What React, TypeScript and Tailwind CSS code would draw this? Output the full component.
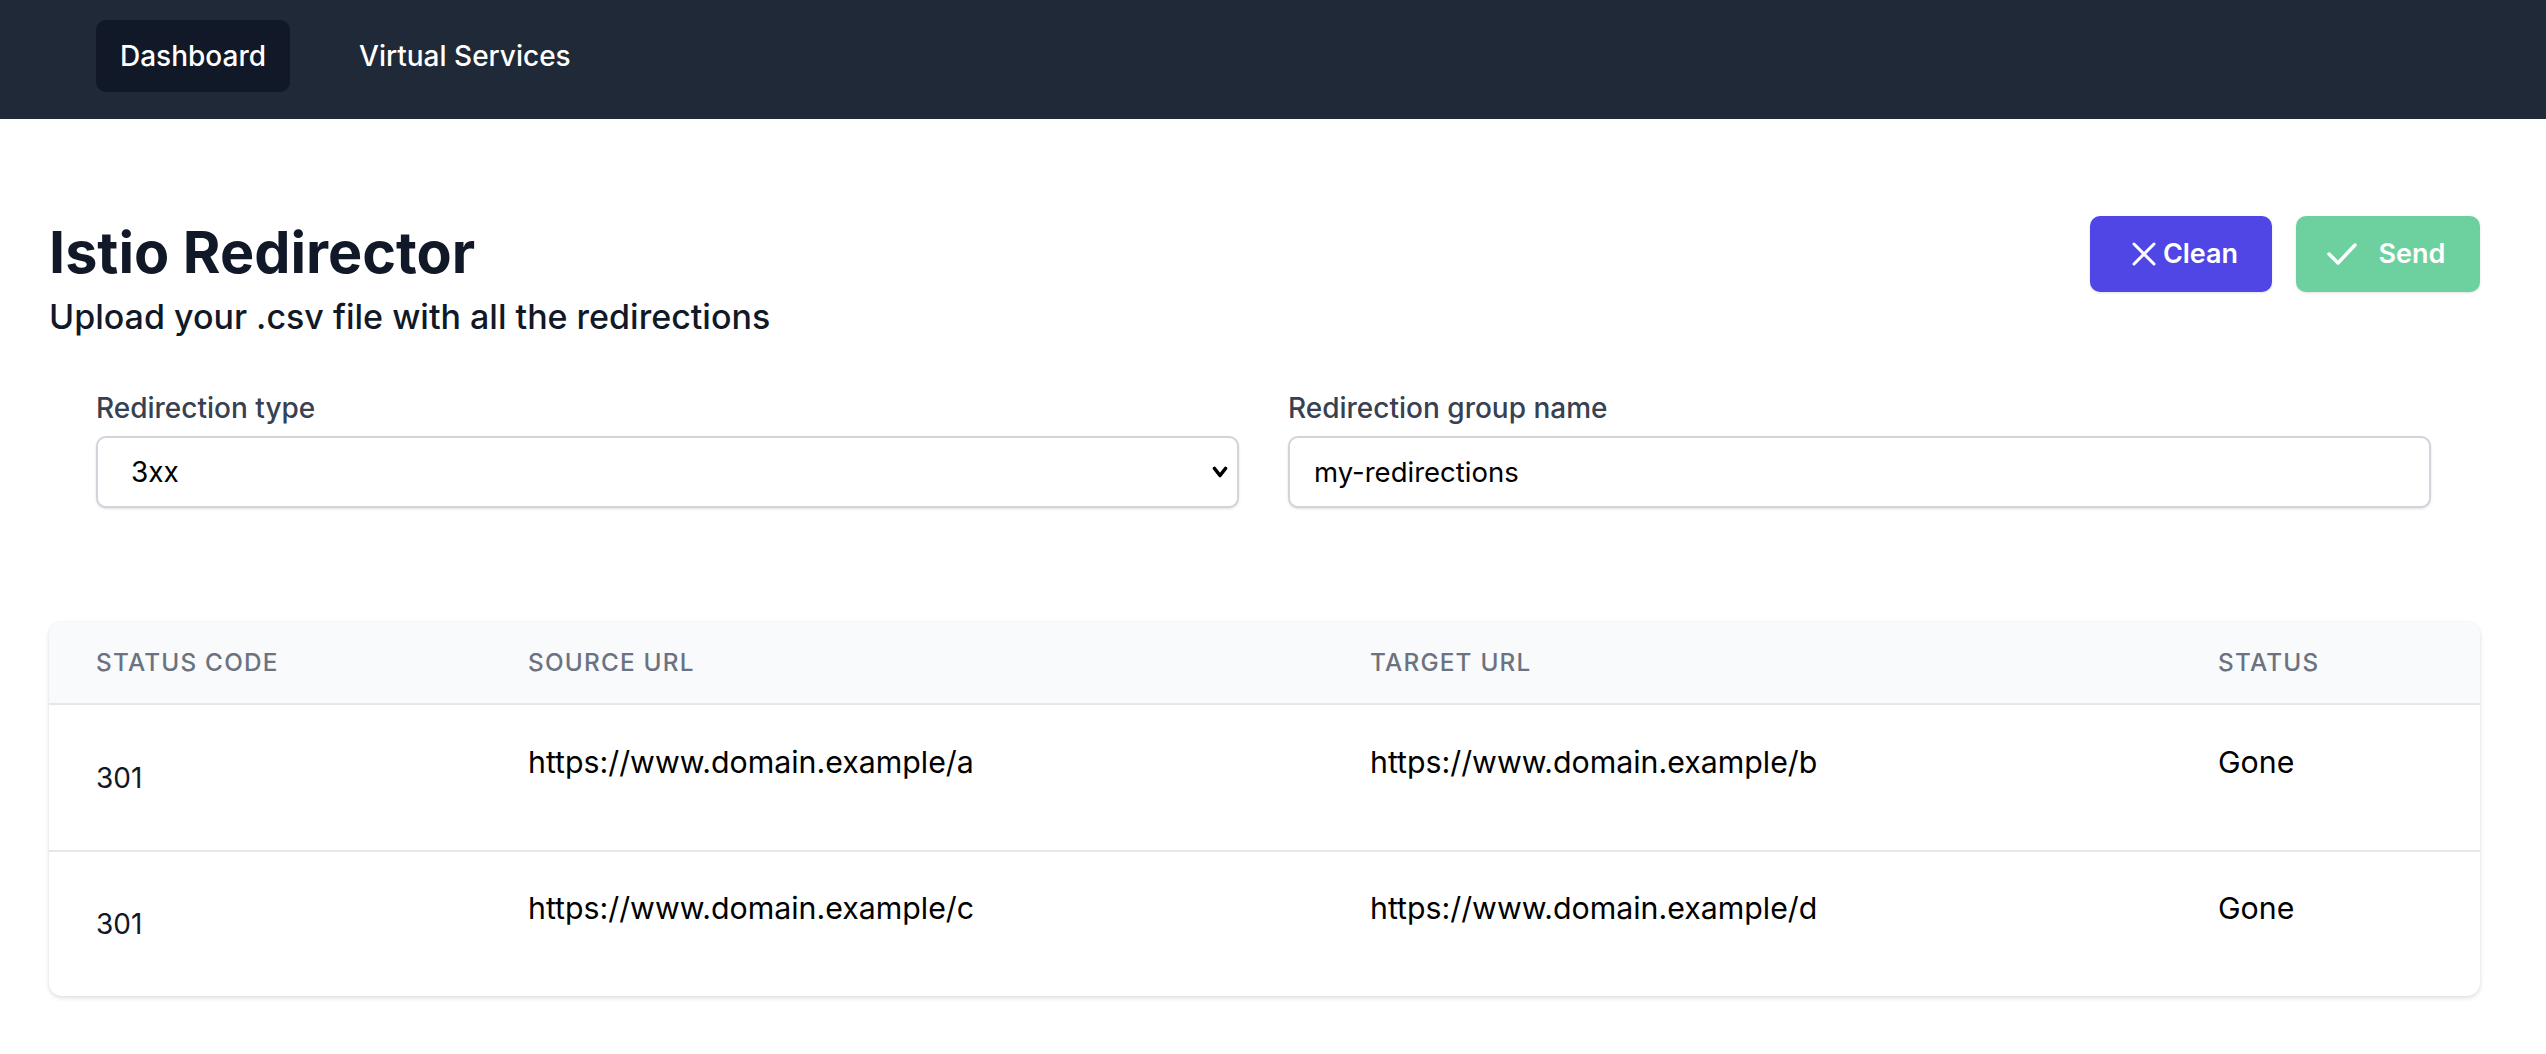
import type { ReactNode } from 'react'

const font = { fontFamily: 'Inter, "Noto Sans", "Liberation Sans", sans-serif' }

const redirections = [
  { code: '301', source: 'https://www.domain.example/a', target: 'https://www.domain.example/b', status: 'Gone' },
  { code: '301', source: 'https://www.domain.example/c', target: 'https://www.domain.example/d', status: 'Gone' },
]

function XIcon() {
  return (
    <svg fill="none" height="24" stroke="currentColor" strokeLinecap="round" strokeWidth="3" viewBox="0 0 24 24" width="24">
      <path d="M2 2 22 22M22 2 2 22" />
    </svg>
  )
}

function CheckIcon() {
  return (
    <svg fill="none" height="24" stroke="currentColor" strokeLinecap="round" strokeLinejoin="round" strokeWidth="3.5" viewBox="0 0 30 24" width="30">
      <polyline points="2,12 11,21 28,3" />
    </svg>
  )
}

function ChevronDown() {
  return (
    <svg fill="none" height="12" stroke="currentColor" strokeLinecap="round" strokeLinejoin="round" strokeWidth="3.6" viewBox="0 0 16 12" width="16">
      <polyline points="2.5,2.5 8,9.5 13.5,2.5" />
    </svg>
  )
}

function NavItem({ active, children }: { active?: boolean; children: ReactNode }) {
  return (
    <a
      className={
        active
          ? 'rounded-[10px] bg-[#111827] px-[24px] py-[16px] text-[28px] leading-[40px] font-medium text-white'
          : 'rounded-[10px] px-[24px] py-[16px] text-[28px] leading-[40px] font-medium text-white'
      }
      href="#"
    >
      {children}
    </a>
  )
}

function Field({ label, children }: { label: string; children: ReactNode }) {
  return (
    <label className="flex flex-col">
      <span className="text-[28px] leading-[39px] font-medium text-[#374151]">{label}</span>
      <div className="mt-[8px]">{children}</div>
    </label>
  )
}

export default function App() {
  return (
    <div className="min-h-screen bg-white" style={font}>
      <nav className="flex h-[119px] items-start gap-[45px] bg-[#1f2937] pt-[20px] pl-[96px]">
        <NavItem active>Dashboard</NavItem>
        <NavItem>Virtual Services</NavItem>
      </nav>

      <main className="pr-[66px] pl-[49px]">
        <header className="mt-[97px] flex items-start justify-between">
          <div className="pt-[4px]">
            <h1 className="text-[57.5px] leading-[65px] font-bold text-[#111827]">Istio Redirector</h1>
            <p className="mt-[9px] text-[34px] leading-[45px] font-medium text-[#111827]">
              Upload your .csv file with all the redirections
            </p>
          </div>
          <div className="flex gap-[24px]">
            <button
              className="flex h-[76px] w-[182px] items-center justify-center gap-[7px] rounded-[10px] bg-[#4f46e5] pl-[8px] text-[27px] font-semibold text-white shadow-sm"
              type="button"
            >
              <XIcon />
              Clean
            </button>
            <button
              className="flex h-[76px] w-[184px] items-center justify-center gap-[22px] rounded-[10px] bg-[#6dd19f] pr-[4px] text-[27px] font-semibold text-white shadow-sm"
              type="button"
            >
              <CheckIcon />
              Send
            </button>
          </div>
        </header>

        <section className="mt-[50px] grid grid-cols-2 gap-x-[49px] pr-[49px] pl-[47px]">
          <Field label="Redirection type">
            <div className="relative">
              <select
                className="h-[72px] w-full appearance-none rounded-[10px] border-2 border-[#d1d5db] bg-white pl-[33px] text-[28px] text-black shadow-sm outline-none"
                defaultValue="3xx"
              >
                <option value="3xx">3xx</option>
                <option value="4xx">4xx</option>
              </select>
              <span className="pointer-events-none absolute top-[30px] right-[11px] text-black">
                <ChevronDown />
              </span>
            </div>
          </Field>
          <Field label="Redirection group name">
            <input
              className="h-[72px] w-full rounded-[10px] border-2 border-[#d1d5db] bg-white pl-[24px] text-[27.5px] text-black shadow-sm outline-none"
              defaultValue="my-redirections"
              type="text"
            />
          </Field>
        </section>

        <section className="mt-[114px] overflow-hidden rounded-[13px] bg-white shadow-[0_2px_5px_rgba(0,0,0,0.13),0_0_2px_rgba(0,0,0,0.06)]">
          <table className="w-full table-fixed border-collapse text-left">
            <colgroup>
              <col className="w-[432px]" />
              <col className="w-[842px]" />
              <col className="w-[848px]" />
              <col />
            </colgroup>
            <thead className="bg-[#f9fafb]">
              <tr className="h-[82px] border-b-2 border-[#e5e7eb]">
                {['Status code', 'Source URL', 'Target URL', 'Status'].map((heading) => (
                  <th
                    className="pl-[47px] align-middle text-[24.3px] font-medium tracking-[0.05em] text-[#6b7280] uppercase"
                    key={heading}
                  >
                    {heading}
                  </th>
                ))}
              </tr>
            </thead>
            <tbody>
              {redirections.map((row, index) => (
                <tr
                  className={index < redirections.length - 1 ? 'h-[147px] border-b-2 border-[#e5e7eb]' : 'h-[145px]'}
                  key={row.source}
                >
                  <td className="pl-[47px] align-middle text-[28px] text-[#111827]">{row.code}</td>
                  <td className="pl-[47px] align-middle">
                    <div className="pb-[31px] text-[30.3px] leading-[45px] text-black">{row.source}</div>
                  </td>
                  <td className="pl-[47px] align-middle">
                    <div className="pb-[31px] text-[30.3px] leading-[45px] text-black">{row.target}</div>
                  </td>
                  <td className="pl-[47px] align-middle">
                    <div className="pb-[31px] text-[30.3px] leading-[45px] text-black">{row.status}</div>
                  </td>
                </tr>
              ))}
            </tbody>
          </table>
        </section>
      </main>
    </div>
  )
}
